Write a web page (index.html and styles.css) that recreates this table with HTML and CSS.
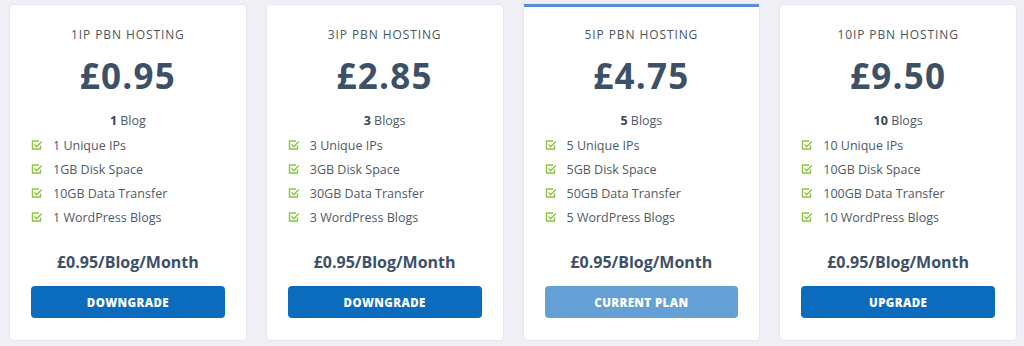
FILE: index.html
```html
<!DOCTYPE html>
<html>
<head>
<meta charset="utf-8">
<link rel="stylesheet" href="styles.css">
</head>
<body>
<div class="plans">
  <div class="card">
    <div class="title">1IP PBN HOSTING</div>
    <div class="price">£0.95</div>
    <div class="blogs"><b>1</b> Blog</div>
    <ul class="features">
      <li><svg viewBox="0 0 12 12"><path d="M9.5 6.5v3.5h-8v-8h6.5" /><path d="M3.5 5.5l2.2 2.2 5-5.2"/></svg>1 Unique IPs</li>
      <li><svg viewBox="0 0 12 12"><path d="M9.5 6.5v3.5h-8v-8h6.5" /><path d="M3.5 5.5l2.2 2.2 5-5.2"/></svg>1GB Disk Space</li>
      <li><svg viewBox="0 0 12 12"><path d="M9.5 6.5v3.5h-8v-8h6.5" /><path d="M3.5 5.5l2.2 2.2 5-5.2"/></svg>10GB Data Transfer</li>
      <li><svg viewBox="0 0 12 12"><path d="M9.5 6.5v3.5h-8v-8h6.5" /><path d="M3.5 5.5l2.2 2.2 5-5.2"/></svg>1 WordPress Blogs</li>
    </ul>
    <div class="rate">£0.95/Blog/Month</div>
    <button class="btn">DOWNGRADE</button>
  </div>
  <div class="card">
    <div class="title">3IP PBN HOSTING</div>
    <div class="price">£2.85</div>
    <div class="blogs"><b>3</b> Blogs</div>
    <ul class="features">
      <li><svg viewBox="0 0 12 12"><path d="M9.5 6.5v3.5h-8v-8h6.5" /><path d="M3.5 5.5l2.2 2.2 5-5.2"/></svg>3 Unique IPs</li>
      <li><svg viewBox="0 0 12 12"><path d="M9.5 6.5v3.5h-8v-8h6.5" /><path d="M3.5 5.5l2.2 2.2 5-5.2"/></svg>3GB Disk Space</li>
      <li><svg viewBox="0 0 12 12"><path d="M9.5 6.5v3.5h-8v-8h6.5" /><path d="M3.5 5.5l2.2 2.2 5-5.2"/></svg>30GB Data Transfer</li>
      <li><svg viewBox="0 0 12 12"><path d="M9.5 6.5v3.5h-8v-8h6.5" /><path d="M3.5 5.5l2.2 2.2 5-5.2"/></svg>3 WordPress Blogs</li>
    </ul>
    <div class="rate">£0.95/Blog/Month</div>
    <button class="btn">DOWNGRADE</button>
  </div>
  <div class="card current">
    <div class="title">5IP PBN HOSTING</div>
    <div class="price">£4.75</div>
    <div class="blogs"><b>5</b> Blogs</div>
    <ul class="features">
      <li><svg viewBox="0 0 12 12"><path d="M9.5 6.5v3.5h-8v-8h6.5" /><path d="M3.5 5.5l2.2 2.2 5-5.2"/></svg>5 Unique IPs</li>
      <li><svg viewBox="0 0 12 12"><path d="M9.5 6.5v3.5h-8v-8h6.5" /><path d="M3.5 5.5l2.2 2.2 5-5.2"/></svg>5GB Disk Space</li>
      <li><svg viewBox="0 0 12 12"><path d="M9.5 6.5v3.5h-8v-8h6.5" /><path d="M3.5 5.5l2.2 2.2 5-5.2"/></svg>50GB Data Transfer</li>
      <li><svg viewBox="0 0 12 12"><path d="M9.5 6.5v3.5h-8v-8h6.5" /><path d="M3.5 5.5l2.2 2.2 5-5.2"/></svg>5 WordPress Blogs</li>
    </ul>
    <div class="rate">£0.95/Blog/Month</div>
    <button class="btn btn-current">CURRENT PLAN</button>
  </div>
  <div class="card">
    <div class="title">10IP PBN HOSTING</div>
    <div class="price">£9.50</div>
    <div class="blogs"><b>10</b> Blogs</div>
    <ul class="features">
      <li><svg viewBox="0 0 12 12"><path d="M9.5 6.5v3.5h-8v-8h6.5" /><path d="M3.5 5.5l2.2 2.2 5-5.2"/></svg>10 Unique IPs</li>
      <li><svg viewBox="0 0 12 12"><path d="M9.5 6.5v3.5h-8v-8h6.5" /><path d="M3.5 5.5l2.2 2.2 5-5.2"/></svg>10GB Disk Space</li>
      <li><svg viewBox="0 0 12 12"><path d="M9.5 6.5v3.5h-8v-8h6.5" /><path d="M3.5 5.5l2.2 2.2 5-5.2"/></svg>100GB Data Transfer</li>
      <li><svg viewBox="0 0 12 12"><path d="M9.5 6.5v3.5h-8v-8h6.5" /><path d="M3.5 5.5l2.2 2.2 5-5.2"/></svg>10 WordPress Blogs</li>
    </ul>
    <div class="rate">£0.95/Blog/Month</div>
    <button class="btn">UPGRADE</button>
  </div>
</div>
</body>
</html>
```

FILE: styles.css
```css
html, body {
  margin: 0;
  padding: 0;
  background: #eef0f5;
  font-family: "Open Sans", "Noto Sans", sans-serif;
}
.plans {
  display: grid;
  grid-template-columns: repeat(4, 1fr);
  gap: 21px;
  padding: 5px 8px 6px 10px;
  height: 346px;
  box-sizing: border-box;
}
.card {
  background: #fff;
  border-radius: 4px;
  box-shadow: 0 0 0 1px #e4e7ee;
  display: flex;
  flex-direction: column;
  align-items: stretch;
  padding: 0 21px;
  box-sizing: border-box;
}
.card.current {
  border-top: 3px solid #5b8ed6;
  border-radius: 0 0 4px 4px;
  margin-top: -1px;
}
.card.current .title { margin-top: 20px; }
.title {
  margin-top: 22px;
  text-align: center;
  font-size: 12px;
  letter-spacing: 0.9px;
  color: #4a5561;
  line-height: 16px;
}
.price {
  margin-top: 8px;
  text-align: center;
  font-family: "Open Sans", sans-serif;
  font-weight: 700;
  font-size: 35px;
  line-height: 50px;
  color: #3e5068;
  letter-spacing: 1.2px;
}
.blogs {
  margin-top: 12px;
  text-align: center;
  font-size: 12.5px;
  color: #4f5a66;
  line-height: 16px;
}
.blogs b { color: #3b4656; }
.features {
  list-style: none;
  margin: 4px 0 0;
  padding: 0;
}
.features li {
  display: flex;
  align-items: center;
  height: 24px;
  font-size: 12.5px;
  color: #4f5a66;
}
.features svg {
  width: 12px;
  height: 12px;
  margin-right: 10px;
  fill: none;
  stroke: #8cc63f;
  stroke-width: 1.4;
}
.rate {
  margin-top: 22px;
  text-align: center;
  font-weight: 700;
  font-size: 16px;
  color: #3e5068;
  line-height: 22px;
}
.btn {
  margin-top: 13px;
  height: 32px;
  border: none;
  border-radius: 4px;
  background: #0b6cbd;
  color: #fff;
  font-family: "Open Sans", sans-serif;
  font-weight: 800;
  font-size: 11.5px;
  letter-spacing: 0.4px;
}
.btn-current {
  background: #64a0d6;
}
```
